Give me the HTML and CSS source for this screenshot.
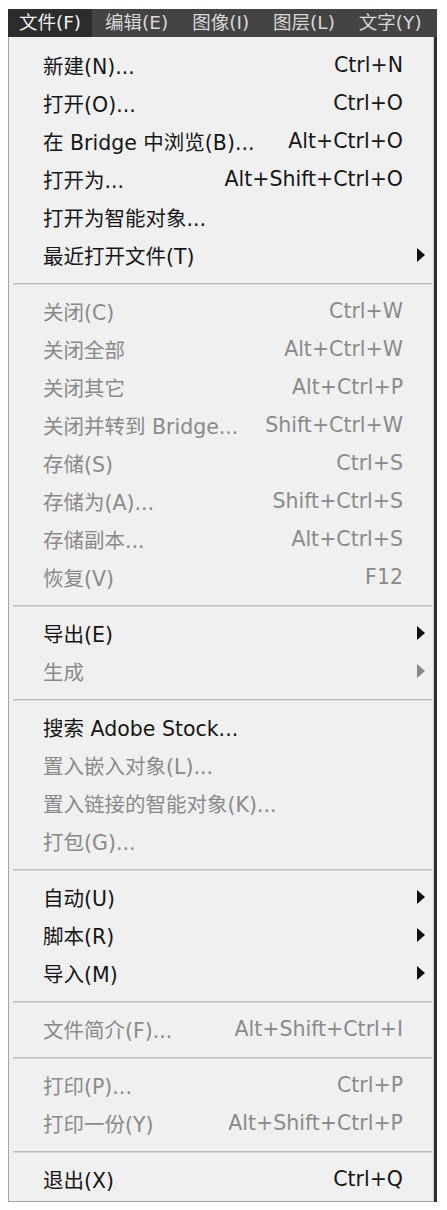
FILE: index.html
```html
<!DOCTYPE html>
<html lang="zh-CN">
<head>
<meta charset="utf-8">
<title>文件菜单</title>
<link rel="stylesheet" href="styles.css">
</head>
<body>
<div class="frame">
  <div class="menubar">
    <span class="bar-item active">文件(F)</span>
    <span class="bar-item">编辑(E)</span>
    <span class="bar-item">图像(I)</span>
    <span class="bar-item">图层(L)</span>
    <span class="bar-item">文字(Y)</span>
  </div>
  <div class="menu">
    <div class="row"><span class="label">新建(N)...</span><span class="key">Ctrl+N</span><span class="sub"></span></div>
    <div class="row"><span class="label">打开(O)...</span><span class="key">Ctrl+O</span><span class="sub"></span></div>
    <div class="row"><span class="label">在 Bridge 中浏览(B)...</span><span class="key">Alt+Ctrl+O</span><span class="sub"></span></div>
    <div class="row"><span class="label">打开为...</span><span class="key">Alt+Shift+Ctrl+O</span><span class="sub"></span></div>
    <div class="row"><span class="label">打开为智能对象...</span><span class="key"></span><span class="sub"></span></div>
    <div class="row"><span class="label">最近打开文件(T)</span><span class="key"></span><span class="sub"><i class="arrow"></i></span></div>
    <div class="sep"></div>
    <div class="row off"><span class="label">关闭(C)</span><span class="key">Ctrl+W</span><span class="sub"></span></div>
    <div class="row off"><span class="label">关闭全部</span><span class="key">Alt+Ctrl+W</span><span class="sub"></span></div>
    <div class="row off"><span class="label">关闭其它</span><span class="key">Alt+Ctrl+P</span><span class="sub"></span></div>
    <div class="row off"><span class="label">关闭并转到 Bridge...</span><span class="key">Shift+Ctrl+W</span><span class="sub"></span></div>
    <div class="row off"><span class="label">存储(S)</span><span class="key">Ctrl+S</span><span class="sub"></span></div>
    <div class="row off"><span class="label">存储为(A)...</span><span class="key">Shift+Ctrl+S</span><span class="sub"></span></div>
    <div class="row off"><span class="label">存储副本...</span><span class="key">Alt+Ctrl+S</span><span class="sub"></span></div>
    <div class="row off"><span class="label">恢复(V)</span><span class="key">F12</span><span class="sub"></span></div>
    <div class="sep"></div>
    <div class="row"><span class="label">导出(E)</span><span class="key"></span><span class="sub"><i class="arrow"></i></span></div>
    <div class="row off"><span class="label">生成</span><span class="key"></span><span class="sub"><i class="arrow"></i></span></div>
    <div class="sep"></div>
    <div class="row"><span class="label">搜索 Adobe Stock...</span><span class="key"></span><span class="sub"></span></div>
    <div class="row off"><span class="label">置入嵌入对象(L)...</span><span class="key"></span><span class="sub"></span></div>
    <div class="row off"><span class="label">置入链接的智能对象(K)...</span><span class="key"></span><span class="sub"></span></div>
    <div class="row off"><span class="label">打包(G)...</span><span class="key"></span><span class="sub"></span></div>
    <div class="sep"></div>
    <div class="row"><span class="label">自动(U)</span><span class="key"></span><span class="sub"><i class="arrow"></i></span></div>
    <div class="row"><span class="label">脚本(R)</span><span class="key"></span><span class="sub"><i class="arrow"></i></span></div>
    <div class="row"><span class="label">导入(M)</span><span class="key"></span><span class="sub"><i class="arrow"></i></span></div>
    <div class="sep"></div>
    <div class="row off"><span class="label">文件简介(F)...</span><span class="key">Alt+Shift+Ctrl+I</span><span class="sub"></span></div>
    <div class="sep"></div>
    <div class="row off"><span class="label">打印(P)...</span><span class="key">Ctrl+P</span><span class="sub"></span></div>
    <div class="row off"><span class="label">打印一份(Y)</span><span class="key">Alt+Shift+Ctrl+P</span><span class="sub"></span></div>
    <div class="sep"></div>
    <div class="row"><span class="label">退出(X)</span><span class="key">Ctrl+Q</span><span class="sub"></span></div>
  </div>
</div>
</body>
</html>
```

FILE: styles.css
```css
html, body {
  margin: 0;
  padding: 0;
  background: #ffffff;
}

body {
  font-family: "DejaVu Sans", "Noto Sans CJK SC", sans-serif;
}

.frame {
  margin: 9px 0 0 8px;
  width: 429px;
}

.menubar {
  display: flex;
  height: 28px;
  background: #444444;
  gap: 2px;
  overflow: hidden;
}

.bar-item {
  display: flex;
  align-items: center;
  flex-shrink: 0;
  padding: 0 11px;
  font-size: 18.5px;
  color: #d8d8d8;
  line-height: 28px;
  white-space: nowrap;
}

.bar-item.active {
  background: #2c2c2c;
  color: #f2f2f2;
}

.menu {
  background: #f0f0f0;
  border-left: 1px solid #a6a6a6;
  border-bottom: 1px solid #a6a6a6;
  border-right: 1px solid #d4d4d4;
  box-shadow: 3px 0 0 #2f2f2f;
  padding: 9px 0 3px 0;
  width: 424px;
}

.row {
  display: flex;
  align-items: center;
  height: 38px;
  padding-left: 34px;
  font-size: 20.5px;
  color: #161616;
}

.row.off {
  color: #8a8a8a;
}

.label {
  flex: 1;
  white-space: nowrap;
}

.key {
  white-space: nowrap;
}

.sub {
  width: 30px;
  display: flex;
  align-items: center;
}

.arrow {
  display: block;
  margin-left: 14px;
  width: 0;
  height: 0;
  border-top: 7px solid transparent;
  border-bottom: 7px solid transparent;
  border-left: 8px solid #111111;
}

.row.off .arrow {
  border-left-color: #8a8a8a;
}

.sep {
  height: 18px;
  display: flex;
  align-items: center;
  padding: 0 1px 0 4px;
}

.sep::before {
  content: "";
  display: block;
  flex: 1;
  height: 1px;
  background: #bdbdbd;
  box-shadow: 0 1px 0 #d8d8d8;
}
```
